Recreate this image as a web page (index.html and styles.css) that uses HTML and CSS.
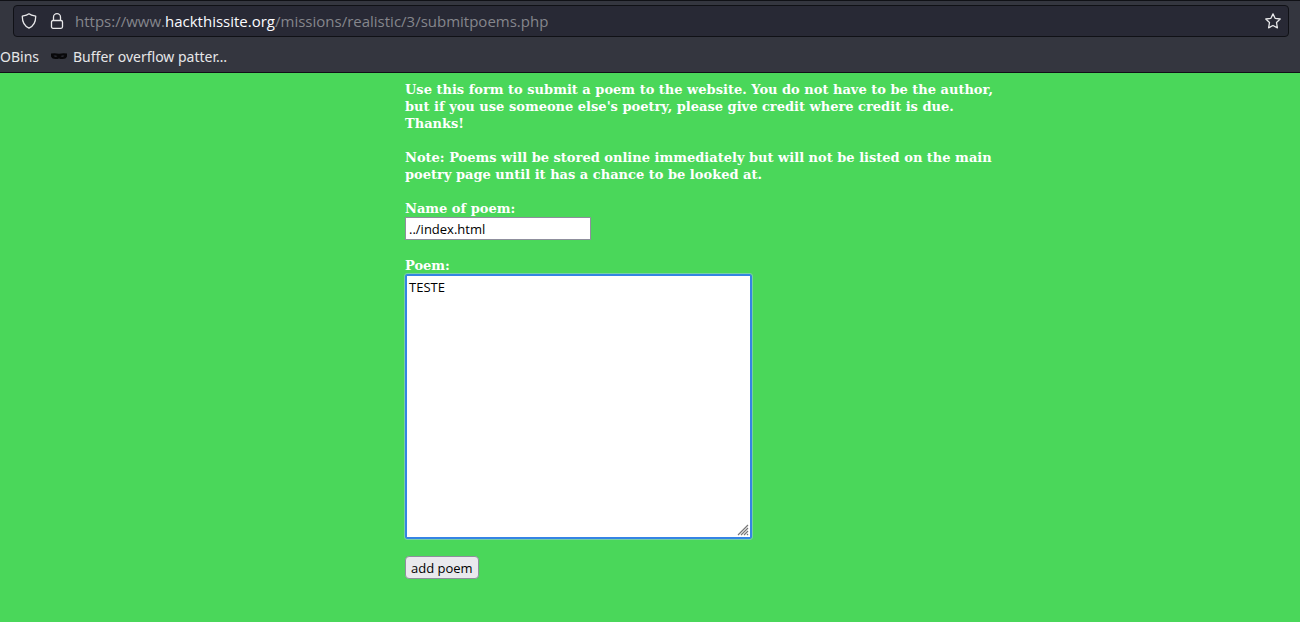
FILE: index.html
```
<!DOCTYPE html>
<html lang="en">
<head>
<meta charset="utf-8">
<title>Submit a poem</title>
<link rel="stylesheet" href="styles.css">
</head>
<body>
<header class="browser">
  <div class="urlbar">
    <svg class="icon" viewBox="0 0 16 16" aria-hidden="true"><path d="M8 .8C6.500 2 4 2.700 1.300 3.200C1.200 8.800 3 13 8 15.200C13 13 14.800 8.800 14.700 3.200C12 2.700 9.500 2 8 .8Z"/></svg>
    <svg class="icon lock" viewBox="0 0 16 16" aria-hidden="true"><rect x="2.500" y="7.500" width="11" height="7.800" rx="1.500"/><path d="M4.500 7.500V4.200a3.500 3.500 0 0 1 7 0v3.300"/></svg>
    <div class="address" role="textbox" contenteditable="true" spellcheck="false" aria-label="Address">https://www.<span class="host">hackthissite.org</span>/missions/realistic/3/submitpoems.php</div>
    <button class="star" type="button" aria-label="Bookmark this page"><svg class="icon" viewBox="0 0 16 16" aria-hidden="true"><path d="M8 .9l2.100 4.400 5.100.7-3.700 3.500.9 5.300L8 12.500l-4.400 2.300.9-5.300L.8 6l5.100-.7z"/></svg></button>
  </div>
  <nav class="bookmarks">
    <a href="#">OBins</a>
    <a href="#"><svg class="mask" viewBox="0 0 16 6" aria-hidden="true"><path fill-rule="evenodd" d="M0 .5Q4-.2 8 .7Q12-.2 16 .5V3.500Q15 6 11.500 6Q9.500 6 8 5.400Q6.500 6 4.500 6Q1 6 0 3.500ZM2.500 2.800Q4.500 4.300 6.500 3.100Q4.500 2 2.500 2.800ZM9.500 3.100Q11.500 4.300 13.500 2.800Q11.500 2 9.500 3.100Z"/></svg>Buffer overflow patter…</a>
  </nav>
</header>
<main class="page">
  <form class="poem-form">
    <p>Use this form to submit a poem to the website. You do not have to be the author, but if you use someone else's poetry, please give credit where credit is due. Thanks!</p>
    <p>Note: Poems will be stored online immediately but will not be listed on the main poetry page until it has a chance to be looked at.</p>
    <div class="field">
      <label for="name">Name of poem:</label>
      <input class="name" id="name" type="text" value="../index.html">
    </div>
    <div class="field">
      <label for="poem">Poem:</label>
      <textarea class="poem" id="poem" rows="15" cols="40">TESTE</textarea>
    </div>
    <button class="submit" type="button">add poem</button>
  </form>
</main>
</body>
</html>
```
FILE: styles.css
```
* {
  box-sizing: border-box;
}

body {
  margin: 0;
  min-height: 100vh;
  background: #4ad75a;
}

.browser {
  padding: 4px 11px 4px 13px;
  border-top: 1px solid #101116;
  border-bottom: 1px solid #101116;
  background: #34363f;
  font-family: "Noto Sans", sans-serif;
}

.urlbar {
  display: flex;
  align-items: center;
  height: 32px;
  padding: 0 7px;
  border: 1px solid #101116;
  border-radius: 4px;
  background: #282935;
}

.icon {
  display: block;
  flex: none;
  width: 16px;
  height: 16px;
  fill: none;
  stroke: #e8e8ea;
  stroke-width: 1.3;
  stroke-linejoin: round;
}

.lock {
  margin: 0 10px 0 12px;
}

.address {
  flex: 1;
  overflow: hidden;
  white-space: nowrap;
  outline: none;
  font-family: "Open Sans", "Noto Sans", sans-serif;
  font-size: 15px;
  line-height: 22px;
  color: #85868c;
}

.host {
  color: #fbfbfe;
}

.star {
  padding: 0;
  border: 0;
  background: none;
}

.bookmarks {
  display: flex;
  gap: 12px;
  height: 31px;
  margin: 0 0 0 -13px;
  padding-top: 4px;
}

.bookmarks a {
  display: flex;
  align-items: center;
  gap: 6px;
  height: 30px;
  font-size: 14px;
  color: #e6e6e8;
  text-decoration: none;
}

.mask {
  width: 16px;
  height: 6px;
  fill: #08080a;
}

.page {
  padding: 8px 16px 16px 405px;
}

.poem-form {
  max-width: 600px;
  font: bold 13px/17px "DejaVu Serif", serif;
  color: #fff;
}

.poem-form p {
  margin: 0 0 17px;
}

.field {
  margin-bottom: 17px;
}

.field label {
  display: block;
}

.name,
.poem,
.submit {
  display: block;
  font: 13px/18px "Open Sans", "Noto Sans", sans-serif;
  color: #000;
}

.name {
  width: 186px;
  height: 23px;
  padding: 1px 3px;
  border: 1px solid #8f8f9d;
  background: #fff;
}

.poem {
  width: 347px;
  height: 265px;
  padding: 2px;
  border: 2px solid #3584e4;
  border-radius: 2px;
  outline: 1px solid #78cfa5;
  background: #fff;
}

.poem::-webkit-resizer {
  background: #fff url("data:image/svg+xml,%3Csvg xmlns='http://www.w3.org/2000/svg' width='15' height='15'%3E%3Cpath d='M3 13L13 3M6 13L13 6M9 13L13 9M12 13L13 12' stroke='%23777' stroke-width='1.2'/%3E%3C/svg%3E") no-repeat;
}

.submit {
  height: 23px;
  padding: 0 5px;
  border: 1px solid #8f8f9d;
  border-radius: 4px;
  background: #e9e9ed;
}
```
